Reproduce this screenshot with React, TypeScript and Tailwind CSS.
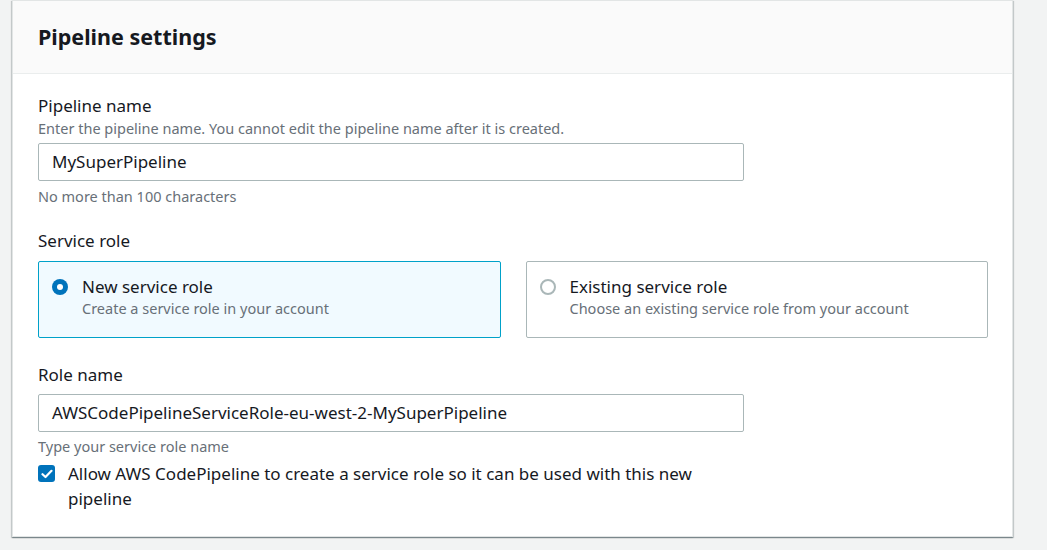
import React from "react";

export default function App() {
  return (
    <div className="min-h-[550px] w-[1047px] bg-[#f2f3f3] pt-0 pl-3 pr-[34px] pb-3" style={{ fontFamily: '"Noto Sans", Arial, sans-serif' }}>
      <div className="w-[1001px] bg-white border border-[#e2e5e5] border-t-[#e2e5e5] shadow-[0_1px_1px_0_rgba(0,28,36,0.3),1px_1px_1px_0_rgba(0,28,36,0.15),-1px_1px_1px_0_rgba(0,28,36,0.15)]">
        <div className="h-[73px] bg-[#fafafa] border-b border-[#eaeded] pl-[25px] pt-[20px]">
          <h2 className="text-[21.5px] leading-[32px] font-bold text-[#16191f]">Pipeline settings</h2>
        </div>
        <div className="pl-[25px] pt-[20px] pb-[25px] text-[#16191f]">
          <div className="w-[706px]">
            <div className="text-[17px] leading-[24px]">Pipeline name</div>
            <div className="text-[14.5px] leading-[20px] text-[#687078]">Enter the pipeline name. You cannot edit the pipeline name after it is created.</div>
            <div className="mt-[5px] h-[38px] border border-[#aab7b8] rounded-[2px] flex items-center px-[13px] text-[17px]">MySuperPipeline</div>
            <div className="mt-[5px] text-[14.5px] leading-[20px] text-[#687078]">No more than 100 characters</div>
          </div>
          <div className="mt-[24px] text-[17px] leading-[22px]">Service role</div>
          <div className="mt-[9px] flex gap-[25px] w-[950px]">
            <div className="flex-1 h-[77px] border border-[#00a1c9] bg-[#f1faff] rounded-[2px] flex items-start px-[13px] pt-[14px]">
              <div className="mt-[3px] w-[16px] h-[16px] rounded-full bg-[#0073bb] flex items-center justify-center">
                <div className="w-[6px] h-[6px] rounded-full bg-white" />
              </div>
              <div className="ml-[14px]">
                <div className="text-[17px] leading-[22px]">New service role</div>
                <div className="text-[14.5px] leading-[20px] text-[#687078]">Create a service role in your account</div>
              </div>
            </div>
            <div className="flex-1 h-[77px] border border-[#aab7b8] bg-white rounded-[2px] flex items-start px-[13px] pt-[14px]">
              <div className="mt-[3px] w-[16px] h-[16px] rounded-full border-2 border-[#aab7b8] bg-white" />
              <div className="ml-[14px]">
                <div className="text-[17px] leading-[22px]">Existing service role</div>
                <div className="text-[14.5px] leading-[20px] text-[#687078]">Choose an existing service role from your account</div>
              </div>
            </div>
          </div>
          <div className="w-[706px]">
            <div className="mt-[26px] text-[17px] leading-[22px]">Role name</div>
            <div className="mt-[8px] h-[38px] border border-[#aab7b8] rounded-[2px] flex items-center px-[13px] text-[17px]">AWSCodePipelineServiceRole-eu-west-2-MySuperPipeline</div>
            <div className="mt-[4px] text-[14.5px] leading-[20px] text-[#687078]">Type your service role name</div>
            <div className="mt-[5px] flex items-start">
              <div className="mt-[4px] w-[17px] h-[17px] rounded-[3px] bg-[#0073bb] flex items-center justify-center shrink-0">
                <svg width="12" height="10" viewBox="0 0 12 10" fill="none"><path d="M1.5 5.2 L4.5 8 L10.5 1.8" stroke="white" strokeWidth="2.2" strokeLinecap="round" strokeLinejoin="round" /></svg>
              </div>
              <div className="ml-[13px] text-[17px] leading-[25px] w-[650px]">Allow AWS CodePipeline to create a service role so it can be used with this new pipeline</div>
            </div>
          </div>
        </div>
      </div>
    </div>
  );
}
